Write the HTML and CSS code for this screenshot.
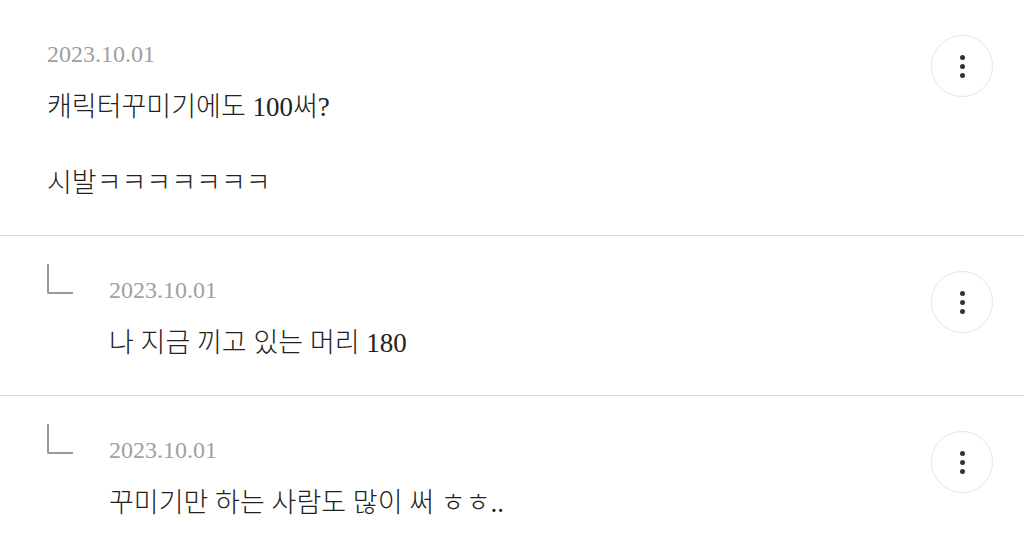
FILE: index.html
```html
<!DOCTYPE html>
<html lang="ko">
<head>
<meta charset="utf-8">
<link rel="stylesheet" href="styles.css">
</head>
<body>
<div class="list">
  <div class="comment">
    <div class="body">
      <div class="date">2023.10.01</div>
      <div class="text">캐릭터꾸미기에도 100써?<br><br>시발ㅋㅋㅋㅋㅋㅋㅋ</div>
    </div>
    <button class="more" aria-label="더보기"><span></span><span></span><span></span></button>
  </div>
  <div class="comment reply">
    <div class="reply-mark"></div>
    <div class="body">
      <div class="date">2023.10.01</div>
      <div class="text">나 지금 끼고 있는 머리 180</div>
    </div>
    <button class="more" aria-label="더보기"><span></span><span></span><span></span></button>
  </div>
  <div class="comment reply">
    <div class="reply-mark"></div>
    <div class="body">
      <div class="date">2023.10.01</div>
      <div class="text">꾸미기만 하는 사람도 많이 써 ㅎㅎ..</div>
    </div>
    <button class="more" aria-label="더보기"><span></span><span></span><span></span></button>
  </div>
</div>
</body>
</html>
```

FILE: styles.css
```css
* { box-sizing: border-box; }
html, body { margin: 0; padding: 0; background: #fff; }
body {
  font-family: "Liberation Serif", "Noto Sans CJK KR", serif;
  color: #222;
  width: 1024px;
  height: 553px;
  overflow: hidden;
}
.list { display: flex; flex-direction: column; }
.comment {
  display: flex;
  align-items: flex-start;
  padding: 39px 31px 33px 47px;
  border-bottom: 1px solid #dcdcdc;
}
.body { flex: 1; min-width: 0; }
.date {
  font-size: 24px;
  line-height: 30px;
  color: #a0a0a0;
  margin-bottom: 19px;
}
.text {
  font-size: 27px;
  line-height: 38px;
  color: #222;
  font-weight: 300;
}
.reply-mark {
  width: 26px;
  height: 30px;
  margin-top: -11px;
  margin-right: 36px;
  border-left: 2px solid #9a9a9a;
  border-bottom: 2px solid #9a9a9a;
  border-bottom-left-radius: 2px;
  flex: none;
}
.more {
  flex: none;
  width: 62px;
  height: 62px;
  margin-top: -4px;
  border: 1.5px solid #e6e6e6;
  border-radius: 50%;
  background: #fff;
  padding: 0;
  display: flex;
  flex-direction: column;
  align-items: center;
  justify-content: center;
  gap: 4px;
}
.more span {
  width: 5px;
  height: 5px;
  border-radius: 50%;
  background: #333;
}
```
